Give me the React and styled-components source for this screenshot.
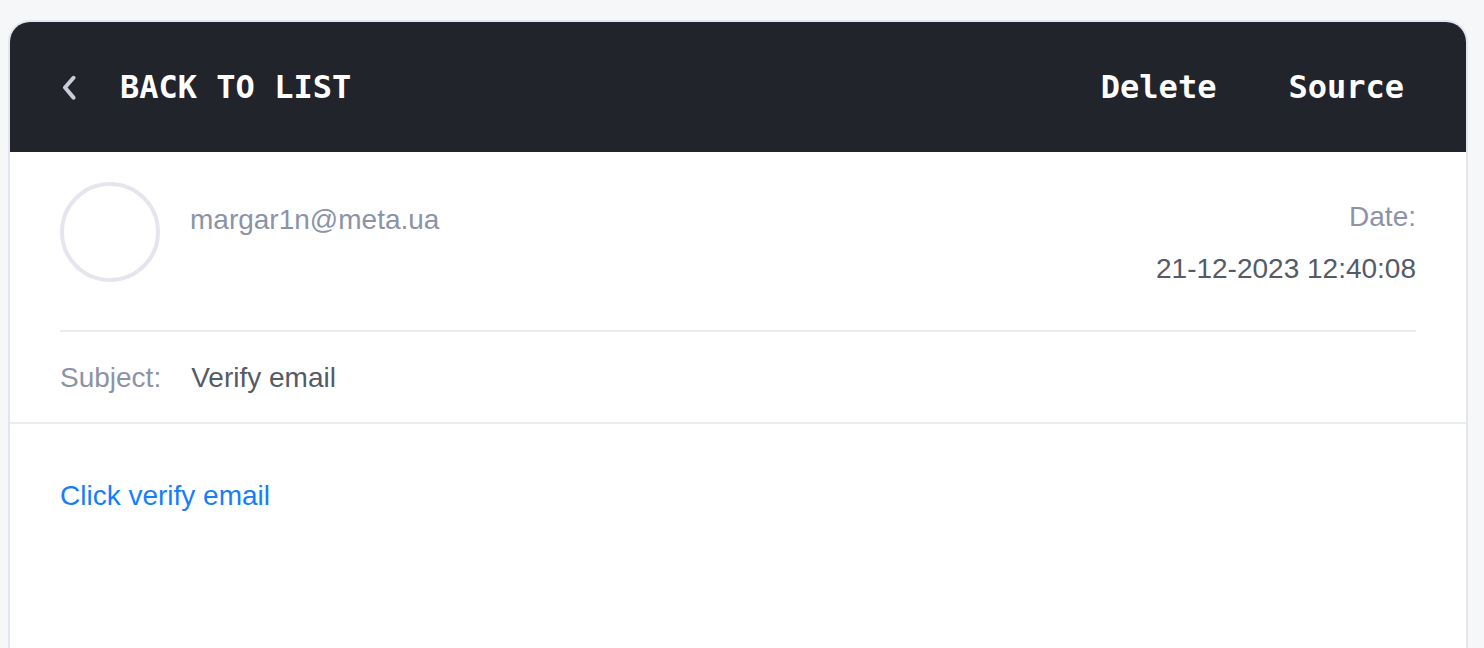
import React from "react";
import styled, { createGlobalStyle } from "styled-components";

const GlobalStyle = createGlobalStyle`
  *, *::before, *::after { box-sizing: border-box; }
  body {
    margin: 0;
    background: #f5f7f9;
    font-family: "Liberation Sans", Arial, sans-serif;
    font-size: 28px;
    line-height: 32px;
    color: #555a67;
  }
`;

const Page = styled.main`
  min-height: 100vh;
  padding: 20px 16px 0 8px;
  display: flex;
`;

const Card = styled.article`
  flex: 1;
  display: flex;
  flex-direction: column;
  border: 2px solid #e4e5f0;
  border-bottom: 0;
  border-radius: 22px 22px 0 0;
  background: #fff;
`;

const Toolbar = styled.header`
  display: flex;
  justify-content: space-between;
  align-items: center;
  padding: 45px 62px 45px 50px;
  background: #22242c;
  border-radius: 20px 20px 0 0;
`;

const ToolButton = styled.button`
  display: flex;
  align-items: center;
  gap: 42px;
  padding: 0;
  border: 0;
  background: none;
  color: #fff;
  font: bold 32px/40px "DejaVu Sans Mono", monospace;
  cursor: pointer;
`;

const Actions = styled.div`
  display: flex;
  gap: 72px;
`;

const Chevron = styled.svg`
  width: 18px;
  height: 26px;
  fill: none;
  stroke: #cbccda;
  stroke-width: 4;
  stroke-linecap: round;
  stroke-linejoin: round;
`;

const Sender = styled.section`
  display: flex;
  margin: 0 50px;
  padding: 30px 0 45px;
  gap: 30px;
  border-bottom: 2px solid #ebebf2;
`;

const Avatar = styled.div`
  flex: none;
  width: 100px;
  height: 100px;
  border: 4px solid #e5e5ef;
  border-radius: 50%;
`;

const Label = styled.span`
  color: #8c93a7;
`;

const Address = styled(Label)`
  flex: 1;
  padding-top: 22px;
`;

const DateBlock = styled.div`
  display: flex;
  flex-direction: column;
  align-items: flex-end;
  gap: 20px;
  padding-top: 19px;
`;

const Subject = styled.section`
  display: flex;
  gap: 30px;
  padding: 30px 50px 28px;
  border-bottom: 2px solid #ebebf2;
`;

const Body = styled.section`
  padding: 56px 50px;
`;

const Link = styled.a`
  color: #157efb;
  text-decoration: none;
`;

export default function App() {
  return (
    <>
      <GlobalStyle />
      <Page>
        <Card>
          <Toolbar>
            <ToolButton type="button">
              <Chevron viewBox="0 0 18 26" aria-hidden="true">
                <path d="M13.5 3.8 L5 13.5 L13.5 23.6" />
              </Chevron>
              BACK TO LIST
            </ToolButton>
            <Actions>
              <ToolButton type="button">Delete</ToolButton>
              <ToolButton type="button">Source</ToolButton>
            </Actions>
          </Toolbar>
          <Sender>
            <Avatar />
            <Address>margar1n@meta.ua</Address>
            <DateBlock>
              <Label>Date:</Label>
              <time dateTime="2023-12-21T12:40:08">21-12-2023 12:40:08</time>
            </DateBlock>
          </Sender>
          <Subject>
            <Label>Subject:</Label>
            <span>Verify email</span>
          </Subject>
          <Body>
            <Link href="#verify">Click verify email</Link>
          </Body>
        </Card>
      </Page>
    </>
  );
}
